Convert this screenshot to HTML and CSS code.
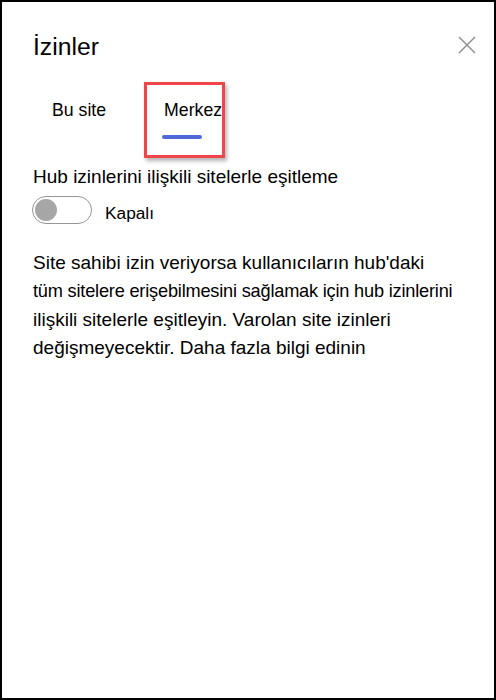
FILE: index.html
```html
<!DOCTYPE html>
<html lang="tr">
<head>
<meta charset="utf-8">
<title>İzinler</title>
<link rel="stylesheet" href="styles.css">
</head>
<body>
<div class="panel">
  <div class="header">
    <h1 class="title">İzinler</h1>
    <button class="close" aria-label="Kapat">
      <svg width="18" height="18" viewBox="0 0 18 18"><path d="M1 1 L17 17 M17 1 L1 17" stroke="#8f8f8f" stroke-width="1.5" fill="none"/></svg>
    </button>
  </div>
  <div class="tabs">
    <div class="tab">
      <span class="tab-text">Bu site</span>
    </div>
    <div class="tab active">
      <span class="tab-text">Merkez</span>
      <span class="tab-bar"></span>
      <span class="highlight"></span>
    </div>
  </div>
  <div class="label">Hub izinlerini ilişkili sitelerle eşitleme</div>
  <div class="toggle-row">
    <span class="toggle"><span class="knob"></span></span>
    <span class="toggle-text">Kapalı</span>
  </div>
  <p class="desc">Site sahibi izin veriyorsa kullanıcıların hub'daki<br><span class="tight">tüm sitelere erişebilmesini sağlamak için hub izinlerini</span><br>ilişkili sitelerle eşitleyin. Varolan site izinleri<br>değişmeyecektir. Daha fazla bilgi edinin</p>
</div>
</body>
</html>
```
FILE: styles.css
```css
html, body {
  margin: 0;
  padding: 0;
  background: #fff;
}
body {
  font-family: "Liberation Sans", Arial, sans-serif;
  color: #000;
}
.panel {
  position: relative;
  width: 496px;
  height: 700px;
  box-sizing: border-box;
  border: 2px solid #000;
  padding: 29.5px 18px 0 31px;
}
.header {
  display: flex;
  justify-content: space-between;
  align-items: flex-start;
}
.title {
  margin: 0;
  font-size: 24.7px;
  font-weight: normal;
  line-height: 30px;
}
.close {
  margin: 4.5px 0 0 0;
  padding: 0;
  border: 0;
  background: none;
  width: 18px;
  height: 18px;
  display: block;
}
.close svg {
  display: block;
}
.tabs {
  display: flex;
  margin-top: 36.5px;
  padding-left: 19px;
  gap: 58px;
}
.tab {
  position: relative;
  display: flex;
  flex-direction: column;
  font-size: 17.7px;
  line-height: 24px;
}
.tab-bar {
  display: block;
  width: 40px;
  height: 4px;
  margin: 13px 0 0 -2px;
  border-radius: 2px;
  background: #4f69d9;
}
.highlight {
  position: absolute;
  left: -20px;
  top: -16px;
  width: 81px;
  height: 76px;
  box-sizing: border-box;
  border: 3px solid #f0464a;
  box-shadow: 2px 3px 4px rgba(0, 0, 0, 0.3);
}
.label {
  margin-top: 26.4px;
  font-size: 19px;
  line-height: 24px;
}
.toggle-row {
  display: flex;
  align-items: flex-start;
  margin-top: 6.6px;
  margin-left: -1px;
}
.toggle {
  display: flex;
  align-items: center;
  box-sizing: border-box;
  width: 60px;
  height: 28px;
  border: 1px solid #969696;
  border-radius: 14px;
  padding-left: 2px;
}
.knob {
  width: 22px;
  height: 22px;
  border-radius: 50%;
  background: #a6a6a6;
}
.toggle-text {
  margin: 5px 0 0 13px;
  font-size: 17.3px;
  line-height: 24px;
}
.desc {
  margin: 24.5px 0 0 0;
  font-size: 19px;
  line-height: 27.7px;
  white-space: nowrap;
}
.tight {
  font-size: 18.2px;
  letter-spacing: -0.2px;
}
```
